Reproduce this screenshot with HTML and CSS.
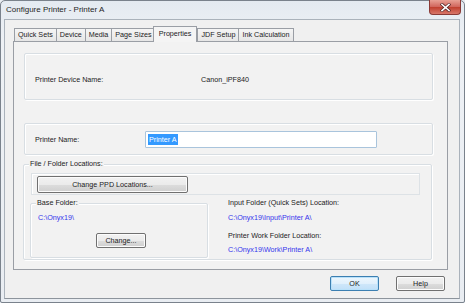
FILE: index.html
```html
<!DOCTYPE html>
<html lang="en">
<head>
    <meta charset="UTF-8">
    <meta name="viewport" content="width=device-width, initial-scale=1.0">
    <title>Configure Printer - Printer A</title>
    <link rel="stylesheet" href="styles.css">
</head>
<body>
    <div class="window">
        <!-- Title bar -->
        <div class="titlebar">
            <span class="title">Configure Printer - Printer A</span>
            <div class="close">
                <svg width="11" height="9" viewBox="0 0 11 9">
                    <path d="M2 1.5 L9 7.5 M9 1.5 L2 7.5" stroke="#5a2a2a" stroke-width="3" stroke-linecap="square"/>
                    <path d="M2 1.5 L9 7.5 M9 1.5 L2 7.5" stroke="#ffffff" stroke-width="1.6" stroke-linecap="square"/>
                </svg>
            </div>
        </div>

        <div class="client">
            <!-- Tabs -->
            <div class="tabs">
                <div class="tab">Quick Sets</div>
                <div class="tab">Device</div>
                <div class="tab">Media</div>
                <div class="tab">Page Sizes</div>
                <div class="tab active">Properties</div>
                <div class="tab">JDF Setup</div>
                <div class="tab">Ink Calculation</div>
            </div>

            <div class="panel">
                <div class="group device">
                    <span class="label">Printer Device Name:</span>
                    <span class="value">Canon_iPF840</span>
                </div>

                <div class="group name">
                    <span class="label">Printer Name:</span>
                    <div class="textbox"><span class="selected">Printer A</span></div>
                </div>

                <div class="group locations">
                    <span class="legend">File / Folder Locations:</span>
                    <div class="ppd-box">
                        <button class="btn ppd-btn">Change PPD Locations...</button>
                    </div>
                    <div class="loc-row">
                        <div class="group base">
                            <span class="legend">Base Folder:</span>
                            <div class="path base-path">C:\Onyx19\</div>
                            <button class="btn change-btn">Change...</button>
                        </div>
                        <div class="loc-right">
                            <div class="loc-label">Input Folder (Quick Sets) Location:</div>
                            <div class="path">C:\Onyx19\Input\Printer A\</div>
                            <div class="loc-label">Printer Work Folder Location:</div>
                            <div class="path">C:\Onyx19\Work\Printer A\</div>
                        </div>
                    </div>
                </div>
            </div>

            <!-- Dialog buttons -->
            <div class="footer">
                <button class="btn dlg-btn default">OK</button>
                <button class="btn dlg-btn">Help</button>
            </div>
        </div>
    </div>
</body>
</html>
```

FILE: styles.css
```css
* {
    box-sizing: border-box;
}

body {
    margin: 0;
    font-family: 'Liberation Sans', Arial, sans-serif;
    font-size: 7.2px;
    color: #1b1b1b;
    background-color: #e9edf2;
}

.window {
    width: 465px;
    height: 303px;
    border: 1px solid #7a828c;
    border-radius: 5px 5px 2px 2px;
    background: linear-gradient(#e4eaf1, #eef1f5 40px, #e9edf2);
    padding: 0 4px 3px 3px;
    display: flex;
    flex-direction: column;
}

.titlebar {
    height: 18px;
    display: flex;
    justify-content: space-between;
    align-items: flex-start;
}

.title {
    font-size: 8px;
    line-height: 18px;
    padding-left: 2px;
    color: #1e1e1e;
}

.close {
    width: 32px;
    height: 15px;
    margin-top: -1px;
    margin-right: -1px;
    border: 1px solid #8a3a36;
    border-top: none;
    border-radius: 0 0 4px 4px;
    background: linear-gradient(#e8a195, #d0645a 50%, #c0402f 52%, #d8776a);
    display: flex;
    align-items: center;
    justify-content: center;
}

.client {
    flex: 1;
    border: 1px solid #aab2bb;
    border-bottom-color: #8d949c;
    background-color: #f0f0f0;
    padding: 0 0 0 8px;
}

/* Tabs */

.tabs {
    display: flex;
    align-items: flex-end;
    height: 21px;
    padding-left: 1px;
}

.tab {
    height: 13px;
    line-height: 12px;
    padding: 0 3px;
    border: 1px solid #9a9ea5;
    border-bottom: none;
    margin-right: -1px;
    background: linear-gradient(#f5f5f5, #e6e6e6);
    color: #1b1b1b;
    white-space: nowrap;
}

.tab.active {
    height: 16px;
    line-height: 14px;
    margin: 0 0 0 -2px;
    padding: 0 5px;
    background: #f4f4f4;
    position: relative;
    top: 1px;
    z-index: 1;
}

.panel {
    width: 435px;
    height: 229px;
    border: 1px solid #9a9ea5;
    background-color: #f2f2f2;
    padding: 11px 0 0 10px;
}

/* Group boxes */

.group {
    border: 1px solid #d8dee3;
    box-shadow: inset 1px 1px 0 #ffffff, 1px 1px 0 #ffffff;
    border-radius: 2px;
}

.device {
    width: 409px;
    height: 47px;
    display: flex;
    align-items: center;
    padding: 5px 0 0 10px;
}

.device .label {
    width: 166px;
}

.name {
    width: 409px;
    height: 32px;
    margin-top: 23px;
    display: flex;
    align-items: center;
    padding-left: 10px;
}

.name .label {
    width: 110px;
}

.textbox {
    width: 232px;
    height: 17px;
    background: #ffffff;
    border: 1px solid #a9c4dc;
    border-radius: 1px;
    padding: 2px 0 0 2px;
}

.selected {
    display: inline-block;
    background: #3399ff;
    color: #ffffff;
    line-height: 11px;
    padding: 0 1px;
}

.locations {
    width: 409px;
    height: 96px;
    margin: 9px 0 0 -1px;
    position: relative;
    padding: 8px 0 0 7px;
}

.legend {
    position: absolute;
    top: -6px;
    left: 5px;
    padding: 0 1px;
    line-height: 10px;
    background: #f2f2f2;
}

.ppd-box {
    width: 389px;
    height: 22px;
    border: 1px solid #dde2e6;
    box-shadow: inset 1px 1px 0 #ffffff;
    padding: 2px 0 0 5px;
}

/* Buttons */

.btn {
    font-family: inherit;
    font-size: 7.2px;
    color: #1b1b1b;
    border: 1px solid #707070;
    border-radius: 2px;
    background: linear-gradient(#f2f2f2, #ebebeb 50%, #dddddd 51%, #cfcfcf);
    box-shadow: inset 0 0 0 1px #fcfcfc;
    padding: 0;
    margin: 0;
}

.ppd-btn {
    width: 151px;
    height: 17px;
}

.loc-row {
    display: flex;
    margin-top: 8px;
    margin-left: -1px;
}

.base {
    width: 178px;
    height: 55px;
    position: relative;
    padding: 9px 0 0 7px;
}

.path {
    color: #3434ec;
    line-height: 10px;
}

.change-btn {
    display: block;
    width: 50px;
    height: 15px;
    margin: 10px 0 0 58px;
}

.loc-right {
    margin-left: 20px;
    margin-top: -5px;
}

.loc-label {
    line-height: 10px;
    margin-bottom: 5px;
}

.loc-right .path {
    margin-bottom: 8px;
}

.loc-right .loc-label + .path + .loc-label {
    margin-bottom: 4px;
}

/* Footer */

.footer {
    display: flex;
    justify-content: flex-end;
    gap: 17px;
    padding: 6px 14px 0 0;
}

.dlg-btn {
    width: 49px;
    height: 15px;
}

.dlg-btn.default {
    border-color: #3c7fb1;
    background: linear-gradient(#eef7fd, #e0f0fc 50%, #cfe7fa 51%, #c0e0f8);
    box-shadow: inset 0 0 0 1px #b9e1fa;
}
```
